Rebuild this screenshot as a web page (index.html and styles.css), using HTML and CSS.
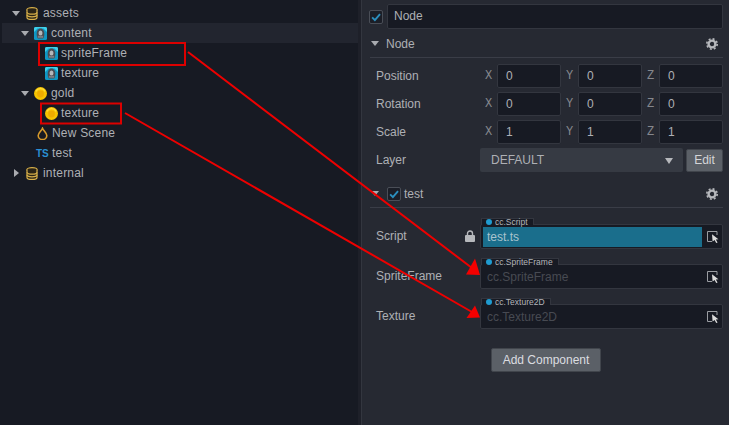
FILE: index.html
```html
<!DOCTYPE html>
<html lang="en">
<head>
    <meta charset="UTF-8">
    <title>Assets and Inspector</title>
    <link rel="stylesheet" href="styles.css">
</head>
<body>
    <svg class="defs" width="0" height="0">
        <symbol id="db" viewBox="0 0 12 13">
            <ellipse cx="6" cy="2.6" rx="5" ry="2" fill="#2a2416" stroke="#d8b04a" stroke-width="1.2"/>
            <path d="M1 2.6v7.8c0 1.1 2.2 2 5 2s5-.9 5-2V2.6" fill="#2a2416" stroke="#d8b04a" stroke-width="1.2"/>
            <path d="M1 5.2c0 1.1 2.2 2 5 2s5-.9 5-2M1 7.8c0 1.1 2.2 2 5 2s5-.9 5-2" fill="none" stroke="#d8b04a" stroke-width="1.2"/>
        </symbol>
        <symbol id="sprite" viewBox="0 0 13 13">
            <rect width="13" height="13" rx="1.5" fill="#0f97c4"/>
            <path d="M0 1.5A1.5 1.5 0 0 1 1.5 0h10A1.5 1.5 0 0 1 13 1.500V5L9.500 1.500h-6L0 5z" fill="#3fd0ea"/>
            <path d="M6.500 1.500c2.600 0 3.800 2.600 3.800 5.300 0 2.500-.6 4.700-1.200 4.700H3.900c-.6 0-1.200-2.200-1.200-4.700 0-2.700 1.200-5.300 3.800-5.300z" fill="#484c53"/>
            <ellipse cx="6.500" cy="6" rx="2" ry="2.600" fill="#b4b8bc"/>
            <path d="M3.800 8.800h5.400v2H3.800z" fill="#7c8086"/>
        </symbol>
        <symbol id="coin" viewBox="0 0 13 13">
            <circle cx="6.5" cy="6.5" r="6.5" fill="#f7c400"/>
            <circle cx="6.5" cy="7" r="3.4" fill="#eeac00"/>
            <path d="M2 4.500A5 5 0 0 1 11 4.500" fill="none" stroke="#ffdc3a" stroke-width="1.2"/>
        </symbol>
        <symbol id="drop" viewBox="0 0 11 13">
            <path d="M5.500 1.200C4.600 3.600 1.200 6 1.200 8.400a4.300 4.200 0 0 0 8.600 0C9.800 6 6.400 3.600 5.500 1.200z" fill="none" stroke="#d79a2b" stroke-width="1.6"/>
        </symbol>
        <symbol id="gear" viewBox="0 0 12 12">
            <circle cx="6" cy="6" r="3.4" fill="none" stroke="#b6b8bc" stroke-width="2.4"/>
            <circle cx="6" cy="6" r="5.2" fill="none" stroke="#b6b8bc" stroke-width="1.6" stroke-dasharray="2 2.08"/>
        </symbol>
        <symbol id="picker" viewBox="0 0 12 12">
            <path d="M10 .5H.5v10H5M10 .5V4" fill="none" stroke="#9a9da2"/>
            <path d="M5 3.200l6.400 5-2.600.3 1.800 3-1.400.5-1.600-3-2 1.600z" fill="#dcdcdc"/>
        </symbol>
        <symbol id="check" viewBox="0 0 14 14">
            <path d="M2.500 7.500l3.200 3.200 6-7" fill="none" stroke="#2b8fbe" stroke-width="2.2"/>
        </symbol>
    </svg>

    <div class="app">
        <aside class="tree">
            <div class="tree-row row-root">
                <span class="caret"></span>
                <svg class="icon"><use href="#db"/></svg>
                <span>assets</span>
            </div>
            <div class="tree-row row-folder active">
                <span class="caret"></span>
                <svg class="icon-big"><use href="#sprite"/></svg>
                <span>content</span>
            </div>
            <div class="tree-row row-leaf">
                <svg class="icon-big"><use href="#sprite"/></svg>
                <span>spriteFrame</span>
            </div>
            <div class="tree-row row-leaf">
                <svg class="icon-big"><use href="#sprite"/></svg>
                <span>texture</span>
            </div>
            <div class="tree-row row-folder">
                <span class="caret"></span>
                <svg class="icon-big"><use href="#coin"/></svg>
                <span>gold</span>
            </div>
            <div class="tree-row row-leaf">
                <svg class="icon-big"><use href="#coin"/></svg>
                <span>texture</span>
            </div>
            <div class="tree-row row-file">
                <svg class="icon-drop"><use href="#drop"/></svg>
                <span>New Scene</span>
            </div>
            <div class="tree-row row-file">
                <span class="ts-icon">TS</span>
                <span>test</span>
            </div>
            <div class="tree-row row-root">
                <span class="caret closed"></span>
                <svg class="icon"><use href="#db"/></svg>
                <span>internal</span>
            </div>
        </aside>

        <main class="inspector">
            <div class="name-row">
                <span class="checkbox"><svg><use href="#check"/></svg></span>
                <div class="name-input">Node</div>
            </div>

            <div class="section-head">
                <span class="caret"></span>
                <span class="section-title">Node</span>
                <svg class="gear"><use href="#gear"/></svg>
            </div>
            <div class="props">
                <div class="prop">
                    <label>Position</label>
                    <div class="vec">
                        <span class="axis">X</span><span class="num">0</span>
                        <span class="axis">Y</span><span class="num">0</span>
                        <span class="axis">Z</span><span class="num">0</span>
                    </div>
                </div>
                <div class="prop">
                    <label>Rotation</label>
                    <div class="vec">
                        <span class="axis">X</span><span class="num">0</span>
                        <span class="axis">Y</span><span class="num">0</span>
                        <span class="axis">Z</span><span class="num">0</span>
                    </div>
                </div>
                <div class="prop">
                    <label>Scale</label>
                    <div class="vec">
                        <span class="axis">X</span><span class="num">1</span>
                        <span class="axis">Y</span><span class="num">1</span>
                        <span class="axis">Z</span><span class="num">1</span>
                    </div>
                </div>
                <div class="prop">
                    <label>Layer</label>
                    <div class="layer">
                        <div class="select">DEFAULT<span class="select-arrow"></span></div>
                        <button class="edit-btn">Edit</button>
                    </div>
                </div>
            </div>

            <div class="section-head section-test">
                <span class="caret"></span>
                <span class="checkbox small"><svg><use href="#check"/></svg></span>
                <span class="section-title">test</span>
                <svg class="gear"><use href="#gear"/></svg>
            </div>
            <div class="refs">
                <div class="ref-row">
                    <label>Script</label>
                    <svg class="lock" viewBox="0 0 10 12">
                        <path d="M2.500 6V3.500a2.500 2.500 0 0 1 5 0V6" fill="none" stroke="#b6b8bc" stroke-width="1.4"/>
                        <rect y="5" width="10" height="7" rx="1" fill="#b6b8bc"/>
                    </svg>
                    <div class="ref-field">
                        <span class="tag"><i></i>cc.Script</span>
                        <div class="ref-value filled">test.ts</div>
                        <svg class="picker"><use href="#picker"/></svg>
                    </div>
                </div>
                <div class="ref-row">
                    <label>SpriteFrame</label>
                    <div class="ref-field">
                        <span class="tag"><i></i>cc.SpriteFrame</span>
                        <div class="ref-value">cc.SpriteFrame</div>
                        <svg class="picker"><use href="#picker"/></svg>
                    </div>
                </div>
                <div class="ref-row">
                    <label>Texture</label>
                    <div class="ref-field">
                        <span class="tag"><i></i>cc.Texture2D</span>
                        <div class="ref-value">cc.Texture2D</div>
                        <svg class="picker"><use href="#picker"/></svg>
                    </div>
                </div>
            </div>
            <div class="add-wrap">
                <button class="add-btn">Add Component</button>
            </div>
        </main>
    </div>

    <!-- red markup drawn over the screenshot -->
    <svg class="markup" width="729" height="425" viewBox="0 0 729 425">
        <rect x="39" y="43" width="146" height="22" fill="none" stroke="#dc0000" stroke-width="2"/>
        <rect x="41" y="103.500" width="80" height="20" fill="none" stroke="#dc0000" stroke-width="2"/>
        <path d="M188 52L472 268M125 113L472 312" fill="none" stroke="#ee0000" stroke-width="2"/>
        <path d="M480 275L466 274.500L475 258.500z" fill="#f40000"/>
        <path d="M480 317.500L466.500 318L475 305.500z" fill="#f40000"/>
    </svg>
</body>
</html>
```
FILE: styles.css
```css
* {
    margin: 0;
    padding: 0;
    box-sizing: border-box;
}

body {
    width: 729px;
    height: 425px;
    overflow: hidden;
    position: relative;
    background: #262932;
    font-family: "Liberation Sans", Arial, sans-serif;
    font-size: 12px;
    color: #aeb0b5;
}

.defs {
    position: absolute;
}

.app {
    display: flex;
    height: 425px;
}

.markup {
    position: absolute;
    top: 0;
    left: 0;
}

/* asset tree */
.tree {
    width: 358px;
    padding-top: 3px;
    background: #171a23;
}

.tree-row {
    display: flex;
    align-items: center;
    height: 20px;
    letter-spacing: 0.2px;
}

.tree-row.active {
    margin-left: 2px;
    padding-left: 19px;
    background: #22252f;
}

.row-root {
    padding-left: 12px;
}

.row-root .caret {
    margin-right: 6px;
}

.row-folder {
    padding-left: 21px;
}

.row-folder .icon-big {
    margin-right: 4px;
}

.row-leaf {
    padding-left: 45px;
}

.row-file {
    padding-left: 36px;
}

.caret {
    width: 0;
    height: 0;
    margin-right: 5px;
    border-left: 4.5px solid transparent;
    border-right: 4.5px solid transparent;
    border-top: 5px solid #a9abb0;
}

.row-root .caret.closed,
.caret.closed {
    margin-left: 2px;
    margin-right: 7px;
    border-top: 4.5px solid transparent;
    border-bottom: 4.5px solid transparent;
    border-left: 5px solid #a9abb0;
    border-right: 0;
}

.icon {
    width: 12px;
    height: 13px;
    margin-right: 5px;
}

.icon-big {
    width: 13px;
    height: 13px;
    margin-right: 3px;
}

.icon-drop {
    width: 11px;
    height: 13px;
    margin: 0 4px 0 1px;
}

.ts-icon {
    width: 16px;
    font-size: 10px;
    font-weight: bold;
    letter-spacing: 0;
    color: #2a8fd4;
}

/* inspector */
.inspector {
    flex: 1;
    padding: 4px 6px 0 8px;
    border-left: 3px solid #1e2029;
    box-shadow: inset 1px 0 0 #33363f;
}

.name-row {
    display: flex;
    align-items: center;
    gap: 4px;
}

.checkbox {
    flex: none;
    width: 14px;
    height: 14px;
    border: 1px solid #4a4e57;
    border-radius: 2px;
    background: #1b1e27;
}

.checkbox svg {
    display: block;
    width: 12px;
    height: 12px;
}

.name-input {
    flex: 1;
    height: 25px;
    padding-left: 6px;
    line-height: 23px;
    background: #171a23;
    border: 1px solid #33363f;
    border-radius: 2px;
}

.section-head {
    display: flex;
    align-items: center;
    height: 29px;
    margin-left: 1px;
    padding: 1px 5px 0 1px;
    border-bottom: 1px solid #3a3d47;
}

.section-title {
    flex: 1;
}

.section-head .caret {
    margin-right: 7px;
}

.gear {
    width: 12px;
    height: 12px;
}

.props {
    display: flex;
    flex-direction: column;
    gap: 4px;
    padding: 6px 0 0 7px;
}

.prop {
    display: flex;
    align-items: center;
    height: 24px;
}

.prop label {
    width: 104px;
}

.vec {
    flex: 1;
    display: grid;
    grid-template-columns: 17px 64px 17px 64px 17px 64px;
    align-items: center;
}

.axis {
    padding-left: 5px;
    font-family: "Liberation Mono", monospace;
    font-size: 12px;
    color: #85878d;
}

.num {
    height: 24px;
    padding-left: 8px;
    line-height: 22px;
    background: #171a23;
    border: 1px solid #33363f;
    border-radius: 2px;
}

.layer {
    flex: 1;
    display: flex;
    align-items: center;
    gap: 3px;
}

.select {
    flex: 1;
    position: relative;
    height: 24px;
    padding-left: 11px;
    line-height: 24px;
    background: #363a43;
    border-radius: 2px;
}

.select-arrow {
    position: absolute;
    top: 10px;
    right: 10px;
    border-left: 4px solid transparent;
    border-right: 4px solid transparent;
    border-top: 6px solid #b6b8bc;
}

.edit-btn {
    width: 37px;
    height: 23px;
    font: inherit;
    color: #d4d5d7;
    background: #5b6067;
    border: 1px solid #41454c;
    border-radius: 2px;
}

.section-test {
    margin-top: 7px;
}

.section-test .caret {
    margin-right: 8px;
}

.checkbox.small {
    margin-right: 3px;
}

.refs {
    display: flex;
    flex-direction: column;
    gap: 15px;
    padding: 16px 0 0 7px;
}

.ref-row {
    display: flex;
    align-items: center;
    position: relative;
    height: 25px;
}

.ref-row label {
    width: 104px;
    margin-top: -2px;
}

.lock {
    position: absolute;
    left: 89px;
    top: 6px;
    width: 10px;
    height: 12px;
}

.ref-field {
    flex: 1;
    position: relative;
    height: 25px;
    padding: 2px 20px 2px 2px;
    background: #171a23;
    border: 1px solid #33363f;
    border-radius: 2px;
}

.ref-value {
    height: 19px;
    padding-left: 4px;
    line-height: 20px;
    color: #474a52;
}

.ref-value.filled {
    height: 20px;
    color: #a9c3ce;
    background: #1a6e8c;
}

.tag {
    position: absolute;
    top: -7px;
    left: 0;
    display: flex;
    align-items: center;
    gap: 3px;
    height: 7px;
    padding: 0 5px 0 4px;
    font-size: 8.5px;
    line-height: 7px;
    color: #b4b6ba;
    background: #171a23;
    border: 1px solid #33363f;
    border-bottom: 0;
}

.tag i {
    width: 6px;
    height: 6px;
    border-radius: 50%;
    background: #1f9bd0;
}

.picker {
    position: absolute;
    top: 6px;
    right: 3px;
    width: 12px;
    height: 12px;
}

.add-wrap {
    display: flex;
    justify-content: center;
    padding-top: 19px;
}

.add-btn {
    width: 110px;
    height: 24px;
    font: inherit;
    color: #dcdde0;
    background: #5b6067;
    border: 1px solid #41454c;
    border-radius: 2px;
}
```
